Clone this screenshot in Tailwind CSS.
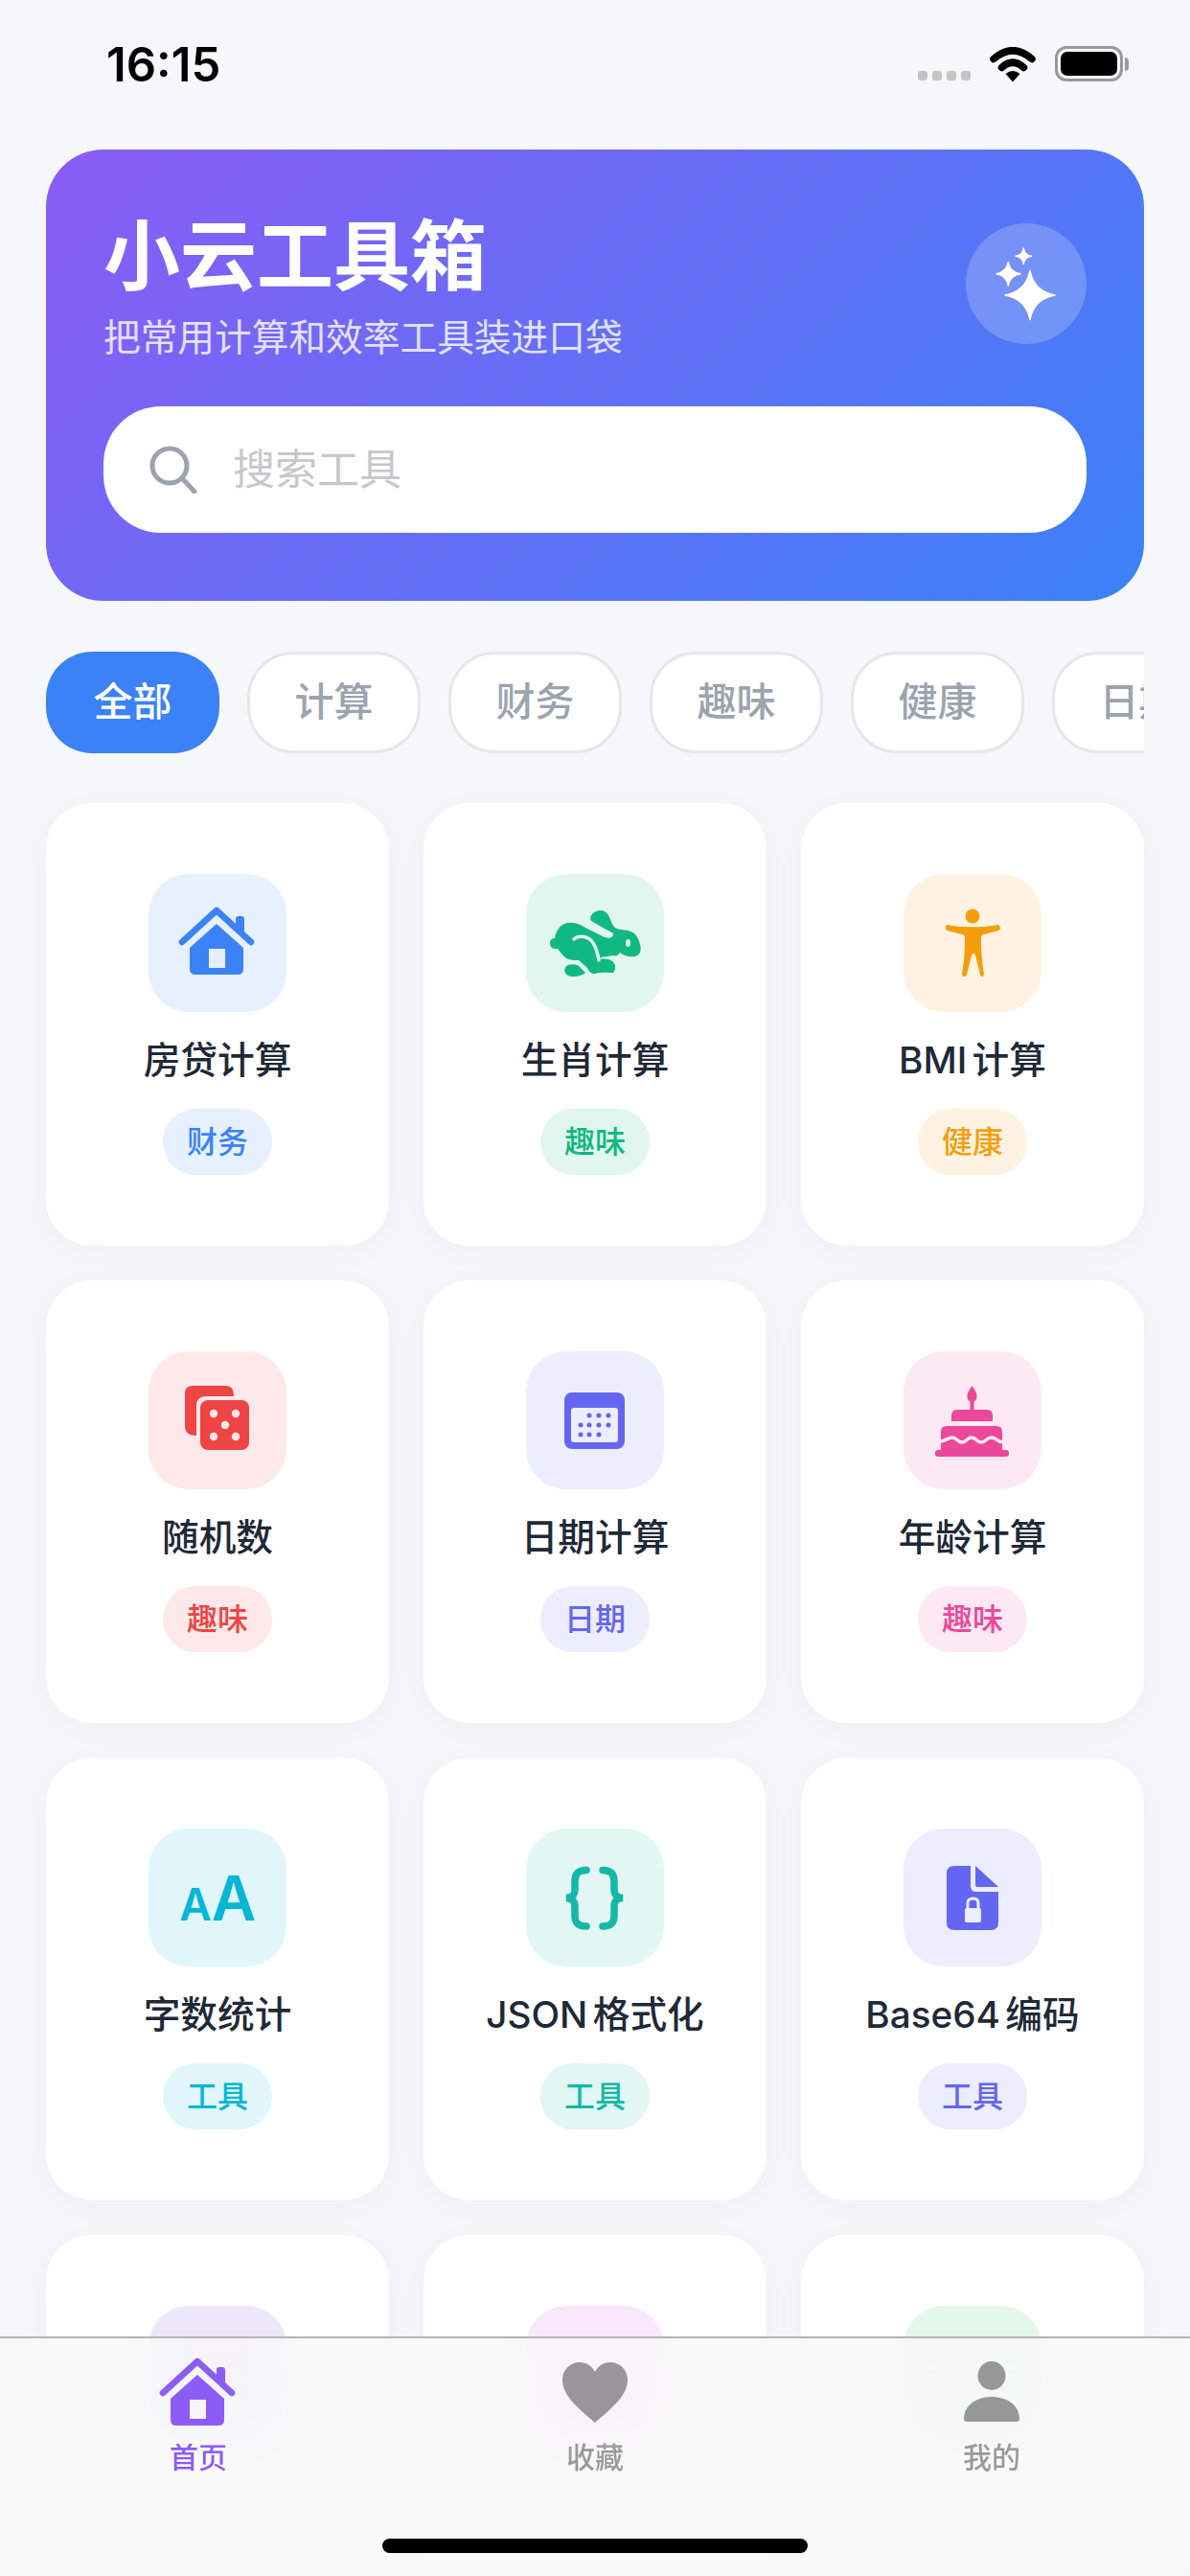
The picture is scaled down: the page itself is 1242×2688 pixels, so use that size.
<!DOCTYPE html>
<html lang="zh">
<head>
<meta charset="utf-8">
<title>小云工具箱</title>
<script src="https://cdn.jsdelivr.net/npm/@tailwindcss/browser@4"></script>
</head>
<body class="[font-family:Inter,'Noto_Sans_CJK_SC',sans-serif]">
<div class="relative w-[1242px] h-[2688px] overflow-hidden bg-[#f5f7fb]">

    <!-- Status bar -->
    <div class="h-[156px] flex items-start justify-between pl-[111px] pr-[64px] pt-[39px]">
        <span class="text-[49px] leading-[58px] font-semibold text-black">16:15</span>
        <div class="flex items-start">
            <div class="flex gap-[5px] mt-[35px] mr-[20px]">
                <span class="w-[10px] h-[10px] rounded-[3px] bg-[#c4c4c4]"></span>
                <span class="w-[10px] h-[10px] rounded-[3px] bg-[#c4c4c4]"></span>
                <span class="w-[10px] h-[10px] rounded-[3px] bg-[#c4c4c4]"></span>
                <span class="w-[10px] h-[10px] rounded-[3px] bg-[#c4c4c4]"></span>
            </div>
            <svg class="w-[48px] h-[37px] mt-[10px] mr-[20px]" viewBox="0 0 48 37">
                <path d="M4 12.500 Q24 -5 44 12.500" fill="none" stroke="#000" stroke-width="7.500" stroke-linecap="round"/>
                <path d="M12.500 21.500 Q24 11 35.500 21.500" fill="none" stroke="#000" stroke-width="7.500" stroke-linecap="round"/>
                <path d="M24 36.500 L16.500 28 Q24 22 31.500 28 Z" fill="#000"/>
            </svg>
            <div class="flex items-center mt-[9px]">
                <div class="w-[71px] h-[37px] rounded-[12px] border-[3px] border-[#999] p-[3px]">
                    <div class="w-full h-full rounded-[7px] bg-black"></div>
                </div>
                <div class="w-[4px] h-[14px] ml-[2px] rounded-r-[4px] bg-[#999]"></div>
            </div>
        </div>
    </div>

    <main class="px-[48px]">
        <!-- Hero -->
        <section class="h-[471px] rounded-[60px] px-[60px] pt-[70px] bg-[linear-gradient(135deg,#8b5cf6,#3b82f6)]">
            <div class="flex items-start justify-between">
                <div>
                    <h1 class="text-[80px] leading-[81px] font-bold text-white">小云工具箱</h1>
                    <p class="mt-[20px] text-[38.700px] leading-[50px] text-white/80">把常用计算和效率工具装进口袋</p>
                </div>
                <div class="w-[126px] h-[126px] mt-[7px] rounded-full bg-white/20">
                    <svg class="w-full h-full" viewBox="0 0 126 126" fill="#fff" stroke="#fff" stroke-width="1.500" stroke-linejoin="round">
                        <path d="M67 49.500 Q71 71 93 75 Q71 79 67 100.500 Q63 79 41 75 Q63 71 67 49.500 Z"/>
                        <path d="M44.300 40.500 Q46 51 57 52.700 Q46 54.500 44.300 65 Q42.500 54.500 32 52.700 Q42.500 51 44.300 40.500 Z"/>
                        <path d="M60.300 26 Q61.300 33.300 68.500 34.300 Q61.300 35.300 60.300 42.500 Q59.300 35.300 52 34.300 Q59.300 33.300 60.300 26 Z"/>
                    </svg>
                </div>
            </div>
            <div class="mt-[47px] h-[132px] rounded-[60px] bg-white flex items-center pl-[48px]">
                <svg class="w-[50px] h-[50px]" viewBox="0 0 50 50" fill="none" stroke="#9ca3af" stroke-width="5" stroke-linecap="round">
                    <circle cx="21" cy="21" r="18"/>
                    <path d="M34 34 L47 48"/>
                </svg>
                <span class="ml-[37px] text-[44px] text-[#c7c7cc]">搜索工具</span>
            </div>
        </section>

        <!-- Category chips -->
        <div class="mt-[53px] flex gap-[29px] overflow-hidden">
            <span class="shrink-0 w-[181px] h-[106px] rounded-[48px] bg-[#3b82f6] flex items-center justify-center text-[41px] font-medium text-white">全部</span>
            <span class="shrink-0 w-[181px] h-[106px] rounded-[48px] bg-white border-[3px] border-[#e5e7eb] flex items-center justify-center text-[41px] font-medium text-[#9ca3af]">计算</span>
            <span class="shrink-0 w-[181px] h-[106px] rounded-[48px] bg-white border-[3px] border-[#e5e7eb] flex items-center justify-center text-[41px] font-medium text-[#9ca3af]">财务</span>
            <span class="shrink-0 w-[181px] h-[106px] rounded-[48px] bg-white border-[3px] border-[#e5e7eb] flex items-center justify-center text-[41px] font-medium text-[#9ca3af]">趣味</span>
            <span class="shrink-0 w-[181px] h-[106px] rounded-[48px] bg-white border-[3px] border-[#e5e7eb] flex items-center justify-center text-[41px] font-medium text-[#9ca3af]">健康</span>
            <span class="shrink-0 w-[181px] h-[106px] rounded-[48px] bg-white border-[3px] border-[#e5e7eb] flex items-center justify-center text-[41px] font-medium text-[#9ca3af]">日期</span>
        </div>

        <!-- Tool grid -->
        <div class="mt-[52px] grid grid-cols-3 gap-[36px]">
            <!-- 房贷计算 -->
            <div class="h-[462px] rounded-[48px] bg-white shadow-[0_6px_30px_rgba(30,41,80,0.04)] pt-[74px] flex flex-col items-center">
                <div class="w-[144px] h-[144px] rounded-[42px] bg-[#e6f0fe]">
                    <svg class="w-full h-full" viewBox="0 0 144 144">
                        <path d="M35 71 L71 38 L107 71" fill="none" stroke="#3b82f6" stroke-width="6.500" stroke-linecap="round" stroke-linejoin="round"/>
                        <path d="M91 47 Q91 44 94 44 H97 Q100 44 100 47 V64 L91 56 Z" fill="#3b82f6"/>
                        <path fill-rule="evenodd" d="M71 52 L99 77 V99 Q99 105 93 105 H49 Q43 105 43 99 V77 Z M63 78 V98 H80 V78 Z" fill="#3b82f6"/>
                    </svg>
                </div>
                <div class="mt-[23px] text-[38.700px] leading-[54px] font-medium text-[#1f2937] [word-spacing:-5px]">房贷计算</div>
                <span class="mt-[24px] w-[114px] h-[69px] rounded-[34px] bg-[#e6f0fe] flex items-center justify-center text-[32px] font-medium text-[#3b82f6]">财务</span>
            </div>
            <!-- 生肖计算 -->
            <div class="h-[462px] rounded-[48px] bg-white shadow-[0_6px_30px_rgba(30,41,80,0.04)] pt-[74px] flex flex-col items-center">
                <div class="w-[144px] h-[144px] rounded-[42px] bg-[#e1f6ef]">
                    <svg class="w-full h-full" viewBox="0 0 144 144">
                        <path d="M78 38 C84 38 87 44 89 50 C91 55 94 58 100 58 C108 59 114 60 117 68 C121 76 121 84 114 86 C108 87 103 86 98 82 C96 85 94 86 91 85 L78 87 L74 90 C78 88 86 88 90 91 C94 94 94 100 91 103 C86 103 78 102 72 104 C68 104 66 102 64 98 L55 90 C49 90 42 90 38 84 C35 81 34 79 33 78 C28 79 25 76 25 72 C25 69 27 67 30 67 C31 60 35 54 40 52 C48 49 56 52 62 56 L82 66 C87 68 92 66 91 62 L68 49 C65 45 70 38 78 38 Z" fill="#10b981"/>
                        <path d="M50 68 C55 63 66 65 70 72 C74 78 75 84 76 90" fill="none" stroke="#e1f6ef" stroke-width="3.500" stroke-linecap="round"/>
                        <ellipse cx="106.500" cy="72" rx="2.500" ry="4" fill="#e1f6ef"/>
                        <path d="M44 95 C48 94 53 94 55 96 L62 103 C58 107 48 108 44 106 C39 103 39 97 44 95 Z" fill="#10b981"/>
                    </svg>
                </div>
                <div class="mt-[23px] text-[38.700px] leading-[54px] font-medium text-[#1f2937] [word-spacing:-5px]">生肖计算</div>
                <span class="mt-[24px] w-[114px] h-[69px] rounded-[34px] bg-[#e1f6ef] flex items-center justify-center text-[32px] font-medium text-[#10b981]">趣味</span>
            </div>
            <!-- BMI 计算 -->
            <div class="h-[462px] rounded-[48px] bg-white shadow-[0_6px_30px_rgba(30,41,80,0.04)] pt-[74px] flex flex-col items-center">
                <div class="w-[144px] h-[144px] rounded-[42px] bg-[#fef3e2]">
                    <svg class="w-full h-full" viewBox="0 0 144 144" fill="#f59e0b">
                        <ellipse cx="72" cy="44" rx="7.500" ry="7.500"/>
                        <path d="M46 53 C55 56 89 56 98 53 C101 53 102 58 99 59 L84 63 C81 64 81 65 81 68 C81 82 82 92 84 104 C84 108 81 108 80 105 L75 85 C74 82 72 82 71 85 L66 105 C65 108 61 108 61 104 C63 92 64 82 64 68 C64 65 64 64 61 63 L46 59 C43 58 43 53 46 53 Z"/>
                    </svg>
                </div>
                <div class="mt-[23px] text-[38.700px] leading-[54px] font-medium text-[#1f2937] [word-spacing:-5px]">BMI 计算</div>
                <span class="mt-[24px] w-[114px] h-[69px] rounded-[34px] bg-[#fef3e2] flex items-center justify-center text-[32px] font-medium text-[#f59e0b]">健康</span>
            </div>
            <!-- 随机数 -->
            <div class="h-[462px] rounded-[48px] bg-white shadow-[0_6px_30px_rgba(30,41,80,0.04)] pt-[74px] flex flex-col items-center">
                <div class="w-[144px] h-[144px] rounded-[42px] bg-[#fde9e9]">
                    <svg class="w-full h-full" viewBox="0 0 144 144">
                        <path d="M46 36 H81 Q89 36 89 47 H60 Q50 47 50 57 V88 Q38 88 38 78 V44 Q38 36 46 36 Z" fill="#ef4444"/>
                        <rect x="54" y="51" width="51" height="52" rx="8" fill="#ef4444"/>
                        <g fill="#fde9e9">
                            <circle cx="68" cy="65" r="4.200"/>
                            <circle cx="91" cy="65" r="4.200"/>
                            <circle cx="80" cy="77" r="4.200"/>
                            <circle cx="68" cy="89" r="4.200"/>
                            <circle cx="91" cy="89" r="4.200"/>
                        </g>
                    </svg>
                </div>
                <div class="mt-[23px] text-[38.700px] leading-[54px] font-medium text-[#1f2937] [word-spacing:-5px]">随机数</div>
                <span class="mt-[24px] w-[114px] h-[69px] rounded-[34px] bg-[#fde9e9] flex items-center justify-center text-[32px] font-medium text-[#ef4444]">趣味</span>
            </div>
            <!-- 日期计算 -->
            <div class="h-[462px] rounded-[48px] bg-white shadow-[0_6px_30px_rgba(30,41,80,0.04)] pt-[74px] flex flex-col items-center">
                <div class="w-[144px] h-[144px] rounded-[42px] bg-[#ecedfe]">
                    <svg class="w-full h-full" viewBox="0 0 144 144">
                        <rect x="40" y="43" width="63" height="59" rx="8" fill="#6366f1"/>
                        <rect x="47" y="59" width="49" height="36" rx="3" fill="#ecedfe"/>
                        <g fill="#6366f1">
                            <circle cx="66" cy="67" r="2.500"/><circle cx="76" cy="67" r="2.500"/><circle cx="86" cy="67" r="2.500"/>
                            <circle cx="57" cy="77" r="2.500"/><circle cx="66" cy="77" r="2.500"/><circle cx="76" cy="77" r="2.500"/><circle cx="86" cy="77" r="2.500"/>
                            <circle cx="57" cy="87" r="2.500"/><circle cx="66" cy="87" r="2.500"/><circle cx="76" cy="87" r="2.500"/>
                        </g>
                    </svg>
                </div>
                <div class="mt-[23px] text-[38.700px] leading-[54px] font-medium text-[#1f2937] [word-spacing:-5px]">日期计算</div>
                <span class="mt-[24px] w-[114px] h-[69px] rounded-[34px] bg-[#ecedfe] flex items-center justify-center text-[32px] font-medium text-[#6366f1]">日期</span>
            </div>
            <!-- 年龄计算 -->
            <div class="h-[462px] rounded-[48px] bg-white shadow-[0_6px_30px_rgba(30,41,80,0.04)] pt-[74px] flex flex-col items-center">
                <div class="w-[144px] h-[144px] rounded-[42px] bg-[#fce9f4]">
                    <svg class="w-full h-full" viewBox="0 0 144 144">
                        <path d="M71.500 36 C74 40 77 44 76.500 48 C76.300 50 75 51.500 73.500 52.500 V61 H69.500 V52.500 C68 51.500 66.700 50 66.500 48 C66 44 69 40 71.500 36 Z" fill="#ec4899"/>
                        <path d="M50 73 V67 Q50 61 56 61 H87 Q93 61 93 67 V73 Z" fill="#ec4899"/>
                        <path d="M39 104 V84 Q39 78 45 78 H97 Q103 78 103 84 V104 Z" fill="#ec4899"/>
                        <rect x="33" y="103" width="77" height="7" rx="3" fill="#ec4899"/>
                        <path d="M38 94 C44 94 46 90 51 90 C56 90 56 95 61 95 C66 95 66 90 71 90 C76 90 76 95 81 95 C86 95 86 90 92 90 C97 90 98 95 104 95" fill="none" stroke="#fce9f4" stroke-width="3.500"/>
                    </svg>
                </div>
                <div class="mt-[23px] text-[38.700px] leading-[54px] font-medium text-[#1f2937] [word-spacing:-5px]">年龄计算</div>
                <span class="mt-[24px] w-[114px] h-[69px] rounded-[34px] bg-[#fce9f4] flex items-center justify-center text-[32px] font-medium text-[#ec4899]">趣味</span>
            </div>
            <!-- 字数统计 -->
            <div class="h-[462px] rounded-[48px] bg-white shadow-[0_6px_30px_rgba(30,41,80,0.04)] pt-[74px] flex flex-col items-center">
                <div class="w-[144px] h-[144px] rounded-[42px] bg-[#e0f6fb]">
                    <svg class="w-full h-full" viewBox="0 0 144 144" fill="#06b6d4" font-weight="600">
                        <text x="49" y="96" text-anchor="middle" font-size="46">A</text>
                        <text x="89" y="96" text-anchor="middle" font-size="64">A</text>
                    </svg>
                </div>
                <div class="mt-[23px] text-[38.700px] leading-[54px] font-medium text-[#1f2937] [word-spacing:-5px]">字数统计</div>
                <span class="mt-[24px] w-[114px] h-[69px] rounded-[34px] bg-[#e0f6fb] flex items-center justify-center text-[32px] font-medium text-[#06b6d4]">工具</span>
            </div>
            <!-- JSON 格式化 -->
            <div class="h-[462px] rounded-[48px] bg-white shadow-[0_6px_30px_rgba(30,41,80,0.04)] pt-[74px] flex flex-col items-center">
                <div class="w-[144px] h-[144px] rounded-[42px] bg-[#e2f6f3]">
                    <svg class="w-full h-full" viewBox="0 0 144 144" fill="none" stroke="#14b8a6" stroke-width="7.500" stroke-linecap="round">
                        <path d="M63 43.500 C55 43.500 51 47 51 55 V63 C51 69 49 72 42 72.500 C49 73 51 76 51 82 V91 C51 99 55 102 63 102"/>
                        <path d="M80 43.500 C88 43.500 92 47 92 55 V63 C92 69 94 72 101 72.500 C94 73 92 76 92 82 V91 C92 99 88 102 80 102"/>
                    </svg>
                </div>
                <div class="mt-[23px] text-[38.700px] leading-[54px] font-medium text-[#1f2937] [word-spacing:-5px]">JSON 格式化</div>
                <span class="mt-[24px] w-[114px] h-[69px] rounded-[34px] bg-[#e2f6f3] flex items-center justify-center text-[32px] font-medium text-[#14b8a6]">工具</span>
            </div>
            <!-- Base64 编码 -->
            <div class="h-[462px] rounded-[48px] bg-white shadow-[0_6px_30px_rgba(30,41,80,0.04)] pt-[74px] flex flex-col items-center">
                <div class="w-[144px] h-[144px] rounded-[42px] bg-[#ecedfe]">
                    <svg class="w-full h-full" viewBox="0 0 144 144">
                        <path d="M53 39 H70 V60 Q70 66 76 66 H99 V98 Q99 106 91 106 H53 Q45 106 45 98 V47 Q45 39 53 39 Z" fill="#6366f1"/>
                        <path d="M75 39 L99 61 H77 Q75 61 75 59 Z" fill="#6366f1"/>
                        <rect x="64" y="83" width="17" height="15" rx="2" fill="#ecedfe"/>
                        <path d="M67 84 V78 Q67 73 72.500 73 Q78 73 78 78 V84" fill="none" stroke="#ecedfe" stroke-width="3"/>
                    </svg>
                </div>
                <div class="mt-[23px] text-[38.700px] leading-[54px] font-medium text-[#1f2937] [word-spacing:-5px]">Base64 编码</div>
                <span class="mt-[24px] w-[114px] h-[69px] rounded-[34px] bg-[#ecedfe] flex items-center justify-center text-[32px] font-medium text-[#6366f1]">工具</span>
            </div>
            <!-- Fourth row, mostly under the tab bar -->
            <div class="h-[462px] rounded-[48px] bg-white shadow-[0_6px_30px_rgba(30,41,80,0.04)] pt-[74px] flex flex-col items-center">
                <div class="w-[144px] h-[144px] rounded-[42px] bg-[#ede7fc]"></div>
            </div>
            <div class="h-[462px] rounded-[48px] bg-white shadow-[0_6px_30px_rgba(30,41,80,0.04)] pt-[74px] flex flex-col items-center">
                <div class="w-[144px] h-[144px] rounded-[42px] bg-[#f9e8fb]"></div>
            </div>
            <div class="h-[462px] rounded-[48px] bg-white shadow-[0_6px_30px_rgba(30,41,80,0.04)] pt-[74px] flex flex-col items-center">
                <div class="w-[144px] h-[144px] rounded-[42px] bg-[#e3f7ea]"></div>
            </div>
        </div>
    </main>

    <!-- Tab bar -->
    <nav class="absolute left-0 right-0 bottom-0 h-[250px] border-t-2 border-[#b4b4b4] bg-[#f8f8f8]/80 backdrop-blur-xl">
        <div class="grid grid-cols-3 pt-[19px]">
            <div class="flex flex-col items-center">
                <svg class="w-[84px] h-[76px] mb-[9px]" viewBox="30 33 84 76">
                    <path d="M35 71 L71 38 L107 71" fill="none" stroke="#8b5cf6" stroke-width="6.500" stroke-linecap="round" stroke-linejoin="round"/>
                    <path d="M91 47 Q91 44 94 44 H97 Q100 44 100 47 V64 L91 56 Z" fill="#8b5cf6"/>
                    <path fill-rule="evenodd" d="M71 52 L99 77 V99 Q99 105 93 105 H49 Q43 105 43 99 V77 Z M63 78 V98 H80 V78 Z" fill="#8b5cf6"/>
                </svg>
                <span class="text-[30px] leading-[40px] font-medium text-[#8b5cf6]">首页</span>
            </div>
            <div class="flex flex-col items-center">
                <svg class="w-[84px] h-[76px] mb-[9px]" viewBox="-8 -6 84 76">
                    <path d="M34 63 C14 46 0 34 0 18 C0 8 8 0 18 0 C25 0 31 4 34 10 C37 4 43 0 50 0 C60 0 68 8 68 18 C68 34 54 46 34 63 Z" fill="#9a9598"/>
                </svg>
                <span class="text-[30px] leading-[40px] font-medium text-[#9a9a9a]">收藏</span>
            </div>
            <div class="flex flex-col items-center">
                <svg class="w-[84px] h-[76px] mb-[9px]" viewBox="0 0 84 76" fill="#959895">
                    <ellipse cx="42" cy="20" rx="14.500" ry="15"/>
                    <path d="M13 65 C13 51 26 42 42 42 C58 42 71 51 71 65 Q71 68 68 68 H16 Q13 68 13 65 Z"/>
                </svg>
                <span class="text-[30px] leading-[40px] font-medium text-[#9a9a9a]">我的</span>
            </div>
        </div>
        <div class="absolute left-[399px] bottom-[24px] w-[444px] h-[15px] rounded-full bg-black"></div>
    </nav>
</div>
</body>
</html>
